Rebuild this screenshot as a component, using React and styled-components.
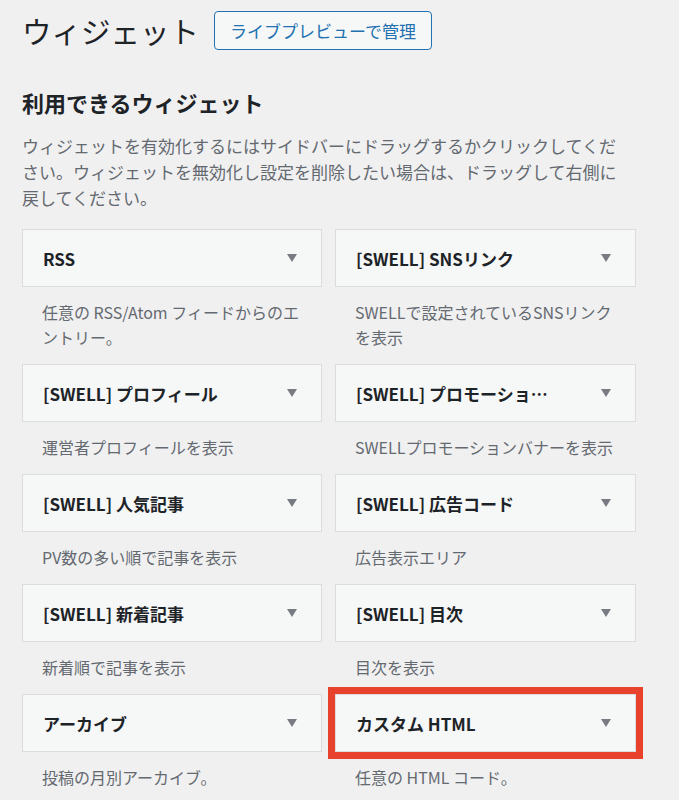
import React from "react";
import styled, { createGlobalStyle } from "styled-components";

const GlobalStyle = createGlobalStyle`
	html, body {
		margin: 0;
		padding: 0;
		background: #f0f0f1;
	}
	body {
		font-family: "Noto Sans CJK JP", "Noto Sans", sans-serif;
		color: #1d2327;
	}
`;

const Page = styled.div`
	width: 679px;
	height: 800px;
	overflow: hidden;
	padding: 11px 0 0 22px;
	box-sizing: border-box;
`;

const TitleRow = styled.div`
	display: flex;
	align-items: center;
	gap: 15px;
	height: 39px;
`;

const PageTitle = styled.h1`
	margin: 0;
	font-size: 29.5px;
	font-weight: 400;
	line-height: 39px;
	color: #1d2327;
`;

const PreviewButton = styled.button`
	height: 39px;
	padding: 0 15px;
	border: 1px solid #2271b1;
	border-radius: 4px;
	background: #f6f7f7;
	color: #2271b1;
	font-family: inherit;
	font-size: 17px;
	line-height: 1;
`;

const SectionTitle = styled.h2`
	margin: 37px 0 0;
	font-size: 22px;
	font-weight: 700;
	line-height: 30px;
	color: #1d2327;
`;

const Intro = styled.p`
	margin: 16px 0 0;
	max-width: 606px;
	font-size: 17px;
	line-height: 26px;
	color: #646970;
`;

const WidgetGrid = styled.div`
	display: grid;
	grid-template-columns: 300px 301px;
	column-gap: 13px;
	margin-top: 18px;
`;

const WidgetItem = styled.div`
	display: flex;
	flex-direction: column;
`;

const WidgetCard = styled.div`
	position: relative;
	height: 58px;
	box-sizing: border-box;
	display: flex;
	align-items: center;
	padding: 0 80px 0 20px;
	background: #f6f7f7;
	border: 1px solid #dcdcde;
	outline: ${(p) => (p.$highlight ? "7px solid #e8412c" : "none")};
`;

const WidgetTitle = styled.h3`
	margin: 0;
	font-size: 17px;
	font-weight: 700;
	color: #1d2327;
	white-space: nowrap;
	overflow: hidden;
	text-overflow: ellipsis;
`;

const Arrow = styled.span`
	position: absolute;
	right: 24px;
	top: 50%;
	margin-top: -4px;
	width: 0;
	height: 0;
	border-left: 5px solid transparent;
	border-right: 5px solid transparent;
	border-top: 8px solid #787c82;
`;

const WidgetDescription = styled.p`
	margin: 0;
	padding: 13px 20px 14px;
	font-size: 16px;
	line-height: 25px;
	color: #646970;
`;

const widgets = [
	{ title: "RSS", desc: "任意の RSS/Atom フィードからのエントリー。" },
	{ title: "[SWELL] SNSリンク", desc: "SWELLで設定されているSNSリンクを表示" },
	{ title: "[SWELL] プロフィール", desc: "運営者プロフィールを表示" },
	{ title: "[SWELL] プロモーションバナー", desc: "SWELLプロモーションバナーを表示" },
	{ title: "[SWELL] 人気記事", desc: "PV数の多い順で記事を表示" },
	{ title: "[SWELL] 広告コード", desc: "広告表示エリア" },
	{ title: "[SWELL] 新着記事", desc: "新着順で記事を表示" },
	{ title: "[SWELL] 目次", desc: "目次を表示" },
	{ title: "アーカイブ", desc: "投稿の月別アーカイブ。" },
	{ title: "カスタム HTML", desc: "任意の HTML コード。", highlight: true },
];

const App = () => {
	return (
		<>
			<GlobalStyle />
			<Page>
				<TitleRow>
					<PageTitle>ウィジェット</PageTitle>
					<PreviewButton>ライブプレビューで管理</PreviewButton>
				</TitleRow>
				<SectionTitle>利用できるウィジェット</SectionTitle>
				<Intro>
					ウィジェットを有効化するにはサイドバーにドラッグするかクリックしてください。ウィジェットを無効化し設定を削除したい場合は、ドラッグして右側に戻してください。
				</Intro>
				<WidgetGrid>
					{widgets.map((w) => (
						<WidgetItem key={w.title}>
							<WidgetCard $highlight={w.highlight}>
								<WidgetTitle>{w.title}</WidgetTitle>
								<Arrow />
							</WidgetCard>
							<WidgetDescription>{w.desc}</WidgetDescription>
						</WidgetItem>
					))}
				</WidgetGrid>
			</Page>
		</>
	);
};

export default App;
